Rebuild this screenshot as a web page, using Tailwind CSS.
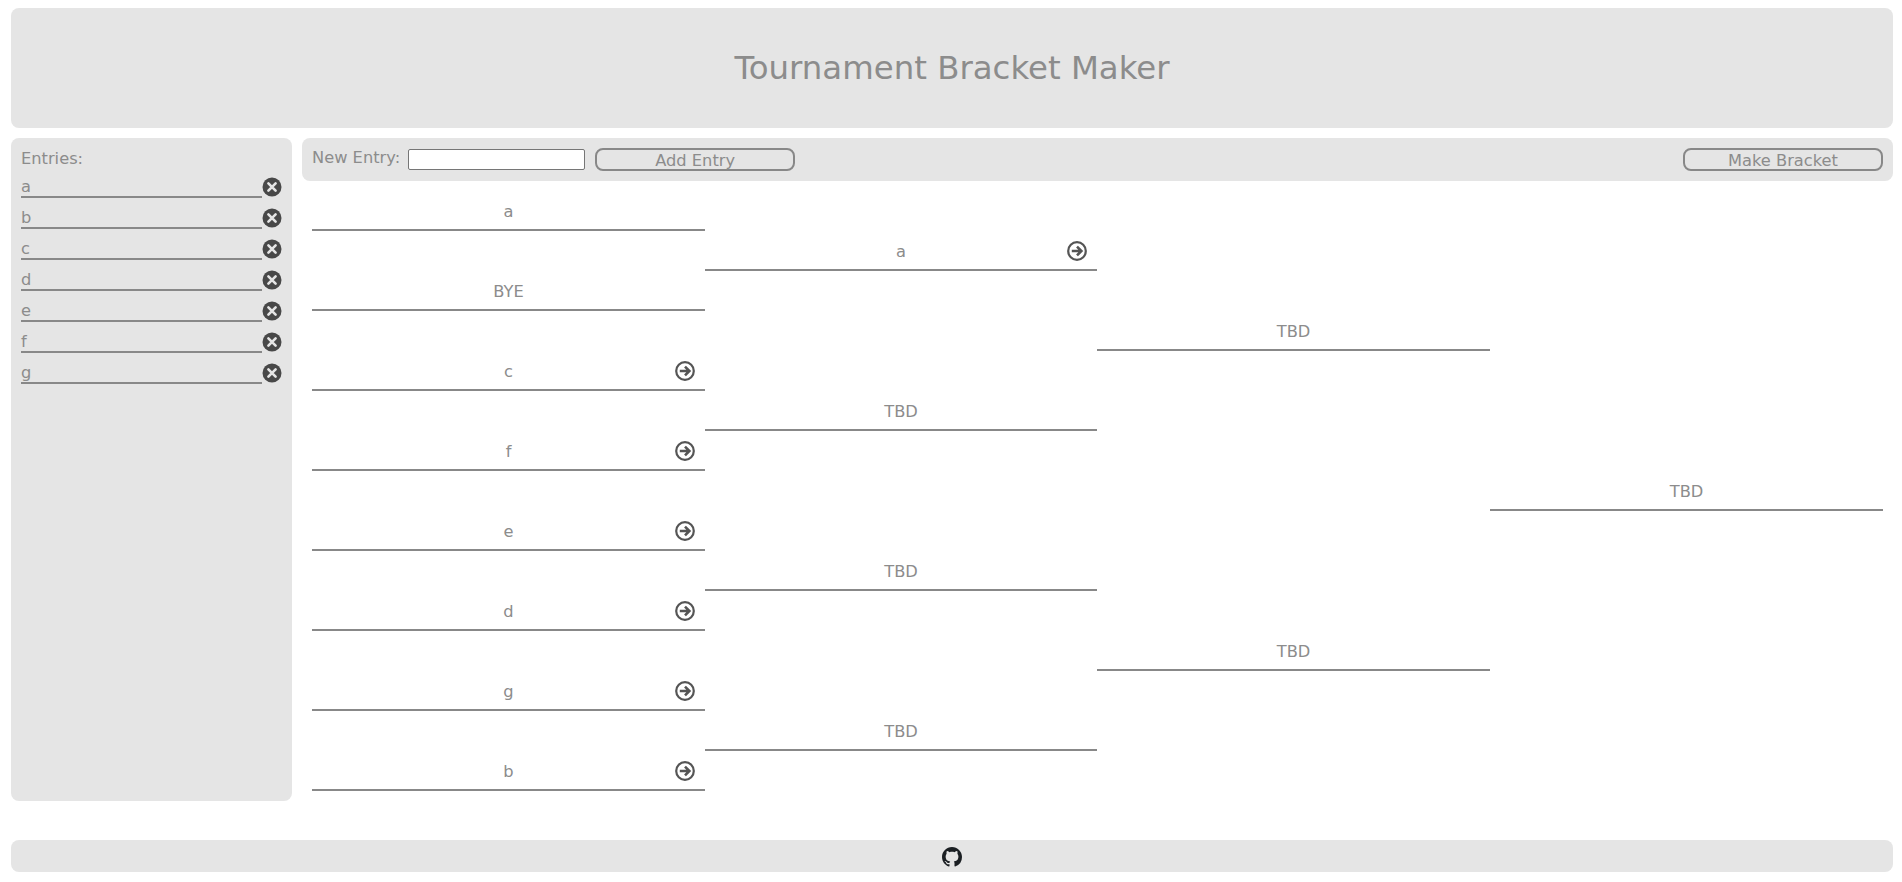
<!DOCTYPE html>
<html lang="en">
<head>
    <meta charset="UTF-8">
    <title>Tournament Bracket Maker</title>
    <script src="https://cdn.jsdelivr.net/npm/@tailwindcss/browser@4"></script>
</head>
<body class="bg-white text-[#8c8c8c] font-['DejaVu_Sans',Verdana,sans-serif] text-[16.25px] pt-[8px] pl-[11px] pr-[9px]">
    <header class="h-[120px] bg-[#e5e5e5] rounded-lg flex items-center justify-center">
        <h1 class="text-[32.4px] font-normal mt-[1px]">Tournament Bracket Maker</h1>
    </header>

    <div class="flex gap-[10px] mt-[10px]">
        <aside class="w-[281px] h-[663px] shrink-0 bg-[#e5e5e5] rounded-lg px-[10px] pt-[10px]">
            <div class="h-[21px] leading-[21px]">Entries:</div>
            <ul id="entries" class="mt-[7px] flex flex-col gap-[10px]"></ul>
        </aside>

        <main class="flex-1">
            <div class="h-[43px] bg-[#e5e5e5] rounded-lg px-[10px] flex items-center">
                <label for="new-entry" class="-mt-[3px]">New Entry:</label>
                <input id="new-entry" type="text" class="ml-[8px] w-[177px] h-[21px] -mt-[1px] bg-white border border-[#767676] rounded-[2px]">
                <button class="ml-[10px] w-[200px] h-[23px] leading-[21px] border-2 border-[#888888] rounded-lg text-center">Add Entry</button>
                <button class="ml-auto w-[200px] h-[23px] leading-[21px] border-2 border-[#888888] rounded-lg text-center">Make Bracket</button>
            </div>
            <div id="bracket" class="grid grid-cols-[393px_392px_393px_1fr] h-[640px] -mt-[10px] px-[10px]"></div>
        </main>
    </div>

    <footer class="mt-[29px] h-[32px] bg-[#e5e5e5] rounded-lg flex items-center justify-center">
        <svg class="w-5 h-5 mt-[1px] text-[#1b1f23]" viewBox="0 0 16 16" fill="currentColor"><path d="M8 0C3.58 0 0 3.58 0 8c0 3.54 2.29 6.53 5.47 7.59.4.07.55-.17.55-.38 0-.19-.01-.82-.01-1.49-2.01.37-2.53-.49-2.69-.94-.09-.23-.48-.94-.82-1.13-.28-.15-.68-.52-.01-.53.63-.01 1.08.58 1.23.82.72 1.21 1.87.87 2.33.66.07-.52.28-.87.51-1.07-1.78-.2-3.64-.89-3.64-3.95 0-.87.31-1.59.82-2.15-.08-.2-.36-1.02.08-2.12 0 0 .67-.21 2.2.82.64-.18 1.32-.27 2-.27.68 0 1.36.09 2 .27 1.53-1.04 2.2-.82 2.2-.82.44 1.1.16 1.92.08 2.12.51.56.82 1.27.82 2.15 0 3.07-1.87 3.75-3.65 3.95.29.25.54.73.54 1.48 0 1.07-.01 1.93-.01 2.2 0 .21.15.46.55.38A8.013 8.013 0 0016 8c0-4.42-3.58-8-8-8z"/></svg>
    </footer>

    <script>
        const entries = ["a", "b", "c", "d", "e", "f", "g"];
        const rounds = [
            [["a", 0], ["BYE", 0], ["c", 1], ["f", 1], ["e", 1], ["d", 1], ["g", 1], ["b", 1]],
            [["a", 1], ["TBD", 0], ["TBD", 0], ["TBD", 0]],
            [["TBD", 0], ["TBD", 0]],
            [["TBD", 0]],
        ];

        const closeIcon = `<svg class="w-5 h-5 shrink-0" viewBox="0 0 20 20"><circle cx="10" cy="10" r="9.5" fill="#484848"/><path d="M6.4 6.4l7.2 7.2M13.6 6.4l-7.2 7.2" stroke="#e5e5e5" stroke-width="2.6" stroke-linecap="round"/></svg>`;
        const arrowIcon = `<svg class="absolute right-[10px] top-[10px] w-5 h-5" viewBox="0 0 20 20" fill="none" stroke="#555555"><circle cx="10" cy="10" r="8.8" stroke-width="2.2"/><path d="M4.8 10h9.4M10 5.6l4.4 4.4-4.4 4.4" stroke-width="2.6"/></svg>`;

        document.getElementById("entries").innerHTML = entries.map(name =>
            `<li class="flex items-center h-[21px]">
                <span class="w-[241px] h-[22px] mt-[1px] leading-[22px] border-b-2 border-[#888888]">${name}</span>
                ${closeIcon}
            </li>`).join("");

        document.getElementById("bracket").innerHTML = rounds.map(round =>
            `<div class="flex flex-col justify-around">
                ${round.map(([name, canAdvance]) =>
                    `<div class="relative h-10 border-b-2 border-[#888888] text-center leading-[42px]">${name}${canAdvance ? arrowIcon : ""}</div>`).join("")}
            </div>`).join("");
    </script>
</body>
</html>
